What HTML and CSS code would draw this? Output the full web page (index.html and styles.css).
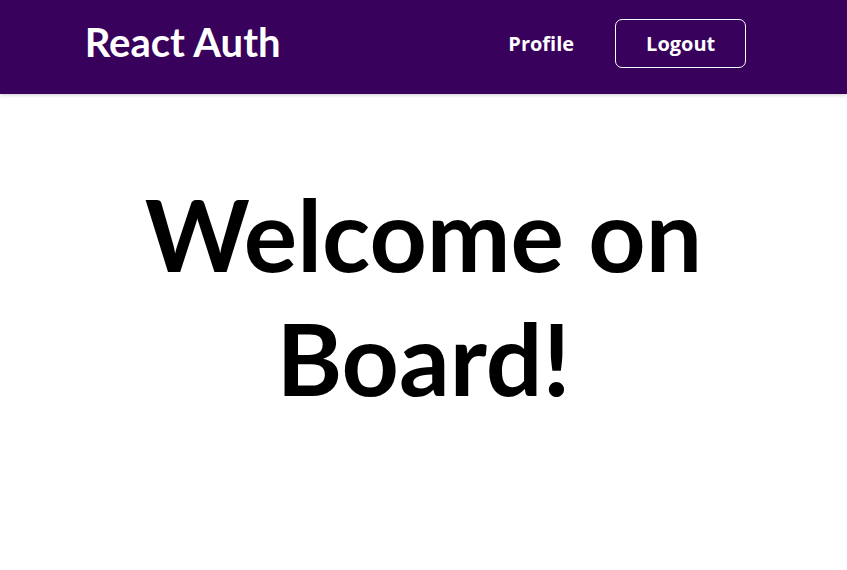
FILE: index.html
```html
<!DOCTYPE html>
<html lang="en">
<head>
<meta charset="utf-8">
<title>React Auth</title>
<link rel="stylesheet" href="styles.css">
</head>
<body>
<header class="header">
  <a class="logo" href="#">React Auth</a>
  <nav>
    <ul class="nav-list">
      <li><a class="nav-link" href="#">Profile</a></li>
      <li><button class="logout">Logout</button></li>
    </ul>
  </nav>
</header>
<main>
  <section class="starting">
    <h1 class="title">Welcome on Board!</h1>
  </section>
</main>
</body>
</html>
```
FILE: styles.css
```css
* { box-sizing: border-box; }
html, body { margin: 0; padding: 0; background: #fff; }
body { font-family: "Open Sans", "Liberation Sans", sans-serif; }

.header {
  height: 94px;
  background: #38015c;
  box-shadow: 0 1px 4px rgba(0, 0, 0, 0.2);
  padding: 0 10%;
  display: flex;
  justify-content: space-between;
  align-items: flex-start;
}

.logo {
  font-family: Lato, "Open Sans", sans-serif;
  font-weight: 700;
  font-size: 40px;
  line-height: 48px;
  color: #fff;
  text-decoration: none;
  margin-top: 18px;
}

.nav-list {
  list-style: none;
  margin: 19px 0 0;
  padding: 0 16px 0 0;
  display: flex;
  align-items: baseline;
  gap: 41px;
}

.nav-link {
  color: #fff;
  font-weight: 700;
  font-size: 20px;
  text-decoration: none;
}

.logout {
  font-family: "Open Sans", sans-serif;
  font-weight: 700;
  font-size: 20px;
  line-height: 27px;
  color: #fff;
  background: transparent;
  border: 1px solid #fff;
  border-radius: 7px;
  padding: 10px 30px;
  cursor: pointer;
}

.starting {
  padding-top: 77px;
  text-align: center;
}

.title {
  margin: 0 auto;
  font-family: Lato, "Open Sans", sans-serif;
  font-weight: 700;
  font-size: 100px;
  line-height: 124px;
  color: #000;
}
```
